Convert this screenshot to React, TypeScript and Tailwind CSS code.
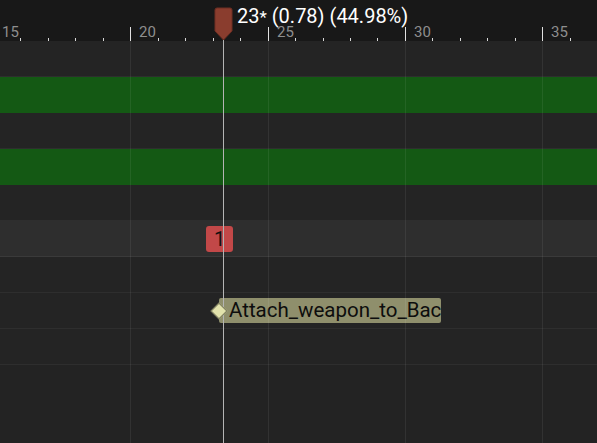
import React from "react";

const X0 = 130.3;
const PX = 27.46;
const fx = (f: number) => X0 + (f - 20) * PX;

const frames: number[] = [];
for (let f = 15; f <= 37; f++) frames.push(f);
const majors = [15, 20, 25, 30, 35];

type Row = { kind: "plain" | "green" | "light"; content?: "badge" | "event" };
const rows: Row[] = [
  { kind: "plain" },
  { kind: "green" },
  { kind: "plain" },
  { kind: "green" },
  { kind: "plain" },
  { kind: "light", content: "badge" },
  { kind: "plain" },
  { kind: "plain", content: "event" },
  { kind: "plain" },
];

export default function App() {
  return (
    <div className="relative w-[597px] h-[443px] overflow-hidden bg-[#232323] font-['Roboto',sans-serif] select-none">
      {/* Ruler */}
      <div className="relative h-[41px] bg-[#181818]">
        {frames.map((f) =>
          majors.includes(f) ? null : (
            <div
              key={f}
              className="absolute bottom-0 w-px h-[3px] bg-[#d8d8d8]"
              style={{ left: Math.round(fx(f)) }}
            />
          )
        )}
        {majors.map((f) => (
          <React.Fragment key={f}>
            <div
              className="absolute bottom-0 w-px h-[14px] bg-[#e0e0e0]"
              style={{ left: Math.round(fx(f)) }}
            />
            <div
              className="absolute top-[25px] text-[15px] leading-[15px] text-[#8e8e8e]"
              style={{ left: Math.round(fx(f)) + 9 }}
            >
              {f}
            </div>
          </React.Fragment>
        ))}
        <div className="absolute left-[237px] top-[5px] text-[20px] leading-[22px] text-white whitespace-nowrap">
          23<span className="text-[17px]">*</span> (0.78) (44.98%)
        </div>
      </div>

      {/* Tracks */}
      <div className="flex flex-col">
        {rows.map((r, i) => (
          <div
            key={i}
            className={
              "h-[36px] flex items-center " +
              (r.kind === "green"
                ? "bg-[#145914]"
                : r.kind === "light"
                ? "bg-[#2e2e2e] border-b border-[#3a3a3a]"
                : "bg-[#242424] border-b border-[#2e2e2e]")
            }
          >
            {r.content === "badge" && (
              <div className="ml-[206px] w-[27px] h-[26px] rounded-[3px] bg-[#c24848] flex items-center justify-center text-[20px] leading-none text-[#111]">
                1
              </div>
            )}
            {r.content === "event" && (
              <div className="ml-[213px] flex items-center">
                <div className="relative z-10 w-[12px] h-[12px] rotate-45 bg-[#e2e2ac] border border-[#77775a]" />
                <div className="-ml-[6px] w-[222px] h-[25px] rounded-[2px] bg-[#8f8f6c] overflow-hidden whitespace-nowrap pl-[10px] text-[20.5px] leading-[25px] text-[#0d0d0d]">
                  Attach_weapon_to_Back
                </div>
              </div>
            )}
          </div>
        ))}
      </div>

      {/* Vertical grid lines */}
      {majors.map((f) => (
        <div
          key={"g" + f}
          className="absolute top-[41px] bottom-0 w-px bg-[rgba(255,255,255,0.07)] pointer-events-none"
          style={{ left: Math.round(fx(f)) }}
        />
      ))}

      {/* Playhead */}
      <div className="absolute left-[223px] top-[40px] bottom-0 w-px bg-[#b4b4b4] pointer-events-none" />
      <svg className="absolute left-[214px] top-[7px]" width="19" height="34" viewBox="0 0 19 34">
        <path
          d="M3 1 H16 Q18 1 18 3 V24 L9.5 33 L1 24 V3 Q1 1 3 1 Z"
          fill="#8a3d2e"
          stroke="#6e2e22"
          strokeWidth="1"
        />
      </svg>
    </div>
  );
}
